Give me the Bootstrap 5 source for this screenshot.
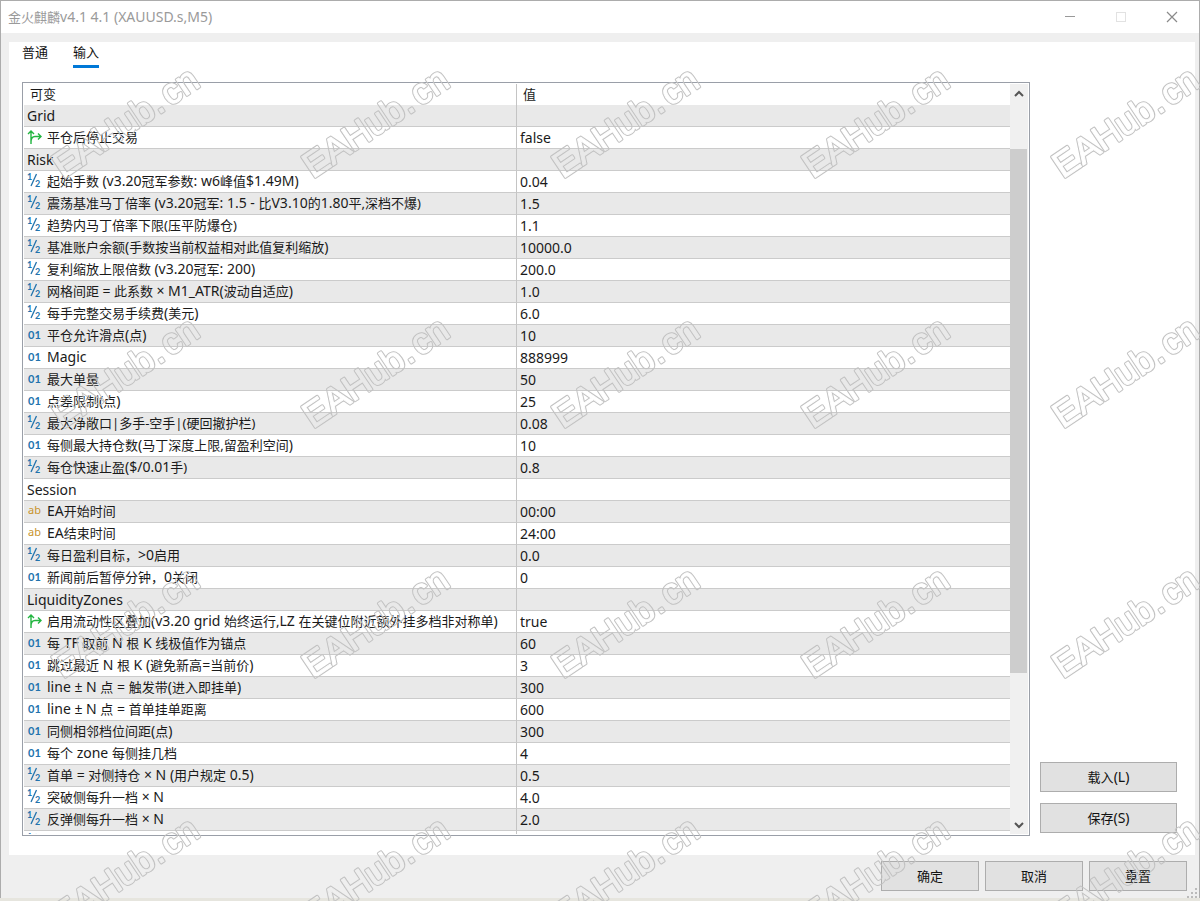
<!DOCTYPE html>
<html lang="zh-CN">
<head>
<meta charset="utf-8">
<meta name="viewport" content="width=device-width, initial-scale=1">
<title>金火麒麟v4.1 4.1 (XAUUSD.s,M5)</title>
<link href="https://cdn.jsdelivr.net/npm/bootstrap@5.3.0/dist/css/bootstrap.min.css" rel="stylesheet">
<style>
body{font-family:"Noto Sans","Noto Sans CJK SC",sans-serif;font-size:13px;line-height:21px;color:#1a1a1a;background:#e6e5de}
.stage{height:100vh;padding-bottom:3px;overflow:hidden}
.win{background:#efefef;border:1px solid #acacac;border-bottom:0;min-height:0}
.titlebar{height:32px;background:#fff;color:#9a9a9a;padding:0 2px 0 7px}
.en{font-size:14px;line-height:1}
.cap{width:51px;height:32px;border:0;background:none;padding:0;line-height:0}
.panel{background:#fff;margin:9px 4px 0 8px;padding:0 18px 19px 13px;min-height:0}
.tabs{height:39px;gap:25px;flex:none;margin-bottom:1px}
.tabs .nav-link{padding:0;height:26px;color:#111;border-bottom:3px solid transparent;border-radius:0}
.tabs .nav-link.active{border-color:#0078d7}
.body-row{min-height:0}
.frame{border:1px solid #9a9fa8;padding:1px;min-height:0}
.params{table-layout:fixed;width:100%;border-collapse:separate;border-spacing:0;color:#1a1a1a}
.params th,.params td{height:22px;padding:0 0 0 3px;line-height:21px;border-bottom:1px solid #cbcbcb;white-space:nowrap;font-weight:400;overflow:hidden}
.params thead th{height:21px;border-bottom:0;padding-left:6px;line-height:21px}
.params th:first-child,.params td:first-child{width:50%;border-right:1px solid #c4c4c4}
.params td:last-child{font-size:14px}
.params tbody tr:nth-child(odd){background:#e9e9e9}
.params .grp td{font-size:14px}
.ic{display:inline-block;width:20px;height:20px;line-height:20px;vertical-align:top;color:#2273ad}
.ic-int::before{content:"01";display:block;padding-left:1px;font:700 11px/19px Lato,sans-serif}
.ic-str{color:#c8942b}
.ic-str::before{content:"ab";display:block;padding-left:1px;font:11px/18px "Noto Sans",sans-serif}
.ic svg{display:block;margin-top:2px}
.sbar{width:18px;background:#f0f0f0;flex:none}
.sbar button{height:19px;border:0;background:none;padding:0;line-height:0}
.thumb{background:#cdcdcd;margin-right:1px}
.side{width:137px;gap:11px;padding-bottom:3px;margin-left:10px;flex:none}
.wbtn{height:30px;border:1px solid #adadad;border-radius:0;background:#e1e1e1;padding:0;font-size:13px;line-height:20px;color:#111}
.wbtn:hover{background:#e5f1fb;border-color:#0078d7}
.foot{padding:6px 12px 7px;gap:6px}
.foot .wbtn{width:98px}
.grip{right:1px;bottom:0;line-height:0}
.wm{inset:0;pointer-events:none}
</style>
</head>
<body>
<div class="stage d-flex flex-column position-relative">
<div class="win d-flex flex-column flex-grow-1 position-relative">
  <header class="titlebar d-flex align-items-center">
    <div class="flex-grow-1">金火麒麟<span class="en">v4.1 4.1 (XAUUSD.s,M5)</span></div>
    <button class="cap" aria-label="最小化"><svg width="12" height="12"><path d="M1 5.500H11" stroke="#999"/></svg></button>
    <button class="cap" aria-label="最大化" disabled><svg width="12" height="12"><rect x="1.500" y="1.500" width="9" height="9" fill="none" stroke="#e2e2e2"/></svg></button>
    <button class="cap" aria-label="关闭"><svg width="12" height="12"><path d="M1 1L11 11M11 1L1 11" stroke="#8a8a8a" stroke-width="1.200"/></svg></button>
  </header>
  <main class="panel d-flex flex-column flex-grow-1">
    <nav class="tabs nav">
      <a class="nav-link" href="#common">普通</a>
      <a class="nav-link active" href="#inputs">输入</a>
    </nav>
    <div class="body-row d-flex flex-grow-1">
      <div class="frame d-flex flex-grow-1">
        <div class="flex-grow-1 overflow-hidden">
        <table class="params">
          <thead><tr><th scope="col">可变</th><th scope="col">值</th></tr></thead>
          <tbody>
          <tr class="grp"><td>Grid</td><td></td></tr>
          <tr><td><span class="ic"><svg width="15" height="16"><use href="#flow"/></svg></span>平仓后停止交易</td><td>false</td></tr>
          <tr class="grp"><td>Risk</td><td></td></tr>
          <tr><td><span class="ic"><svg width="15" height="16"><use href="#half"/></svg></span>起始手数 <span class="en">(v3.20</span>冠军参数<span class="en">: w6</span>峰值<span class="en">$1.49M)</span></td><td>0.04</td></tr>
          <tr><td><span class="ic"><svg width="15" height="16"><use href="#half"/></svg></span>震荡基准马丁倍率 <span class="en">(v3.20</span>冠军<span class="en">: 1.5 - </span>比<span class="en">V3.10</span>的<span class="en">1.80</span>平,深档不爆)</td><td>1.5</td></tr>
          <tr><td><span class="ic"><svg width="15" height="16"><use href="#half"/></svg></span>趋势内马丁倍率下限(压平防爆仓)</td><td>1.1</td></tr>
          <tr><td><span class="ic"><svg width="15" height="16"><use href="#half"/></svg></span>基准账户余额<span class="en">(</span>手数按当前权益相对此值复利缩放<span class="en">)</span></td><td>10000.0</td></tr>
          <tr><td><span class="ic"><svg width="15" height="16"><use href="#half"/></svg></span>复利缩放上限倍数 <span class="en">(v3.20</span>冠军<span class="en">: 200)</span></td><td>200.0</td></tr>
          <tr><td><span class="ic"><svg width="15" height="16"><use href="#half"/></svg></span>网格间距 <span class="en">= </span>此系数 <span class="en">× M1_ATR(</span>波动自适应<span class="en">)</span></td><td>1.0</td></tr>
          <tr><td><span class="ic"><svg width="15" height="16"><use href="#half"/></svg></span>每手完整交易手续费<span class="en">(</span>美元<span class="en">)</span></td><td>6.0</td></tr>
          <tr><td><span class="ic ic-int"></span>平仓允许滑点<span class="en">(</span>点<span class="en">)</span></td><td>10</td></tr>
          <tr><td><span class="ic ic-int"></span><span class="en">Magic</span></td><td>888999</td></tr>
          <tr><td><span class="ic ic-int"></span>最大单量</td><td>50</td></tr>
          <tr><td><span class="ic ic-int"></span>点差限制<span class="en">(</span>点<span class="en">)</span></td><td>25</td></tr>
          <tr><td><span class="ic"><svg width="15" height="16"><use href="#half"/></svg></span>最大净敞口|多手-空手|(硬回撤护栏)</td><td>0.08</td></tr>
          <tr><td><span class="ic ic-int"></span>每侧最大持仓数<span class="en">(</span>马丁深度上限,留盈利空间<span class="en">)</span></td><td>10</td></tr>
          <tr><td><span class="ic"><svg width="15" height="16"><use href="#half"/></svg></span>每仓快速止盈<span class="en">($/0.01</span>手)</td><td>0.8</td></tr>
          <tr class="grp"><td>Session</td><td></td></tr>
          <tr><td><span class="ic ic-str"></span><span class="en">EA</span>开始时间</td><td>00:00</td></tr>
          <tr><td><span class="ic ic-str"></span><span class="en">EA</span>结束时间</td><td>24:00</td></tr>
          <tr><td><span class="ic"><svg width="15" height="16"><use href="#half"/></svg></span>每日盈利目标，<span class="en">&gt;0</span>启用</td><td>0.0</td></tr>
          <tr><td><span class="ic ic-int"></span>新闻前后暂停分钟，<span class="en">0</span>关闭</td><td>0</td></tr>
          <tr class="grp"><td>LiquidityZones</td><td></td></tr>
          <tr><td><span class="ic"><svg width="15" height="16"><use href="#flow"/></svg></span>启用流动性区叠加<span class="en">(v3.20 grid </span>始终运行,<span class="en">LZ </span>在关键位附近额外挂多档非对称单<span class="en">)</span></td><td>true</td></tr>
          <tr><td><span class="ic ic-int"></span>每<span class="en"> TF </span>取前<span class="en"> N </span>根<span class="en"> K </span>线极值作为锚点</td><td>60</td></tr>
          <tr><td><span class="ic ic-int"></span>跳过最近<span class="en"> N </span>根<span class="en"> K (</span>避免新高<span class="en">=</span>当前价<span class="en">)</span></td><td>3</td></tr>
          <tr><td><span class="ic ic-int"></span><span class="en">line ± N </span>点<span class="en"> = </span>触发带<span class="en">(</span>进入即挂单<span class="en">)</span></td><td>300</td></tr>
          <tr><td><span class="ic ic-int"></span><span class="en">line ± N </span>点<span class="en"> = </span>首单挂单距离</td><td>600</td></tr>
          <tr><td><span class="ic ic-int"></span>同侧相邻档位间距<span class="en">(</span>点<span class="en">)</span></td><td>300</td></tr>
          <tr><td><span class="ic ic-int"></span>每个<span class="en"> zone </span>每侧挂几档</td><td>4</td></tr>
          <tr><td><span class="ic"><svg width="15" height="16"><use href="#half"/></svg></span>首单<span class="en"> = </span>对侧持仓<span class="en"> × N (</span>用户规定<span class="en"> 0.5)</span></td><td>0.5</td></tr>
          <tr><td><span class="ic"><svg width="15" height="16"><use href="#half"/></svg></span>突破侧每升一档<span class="en"> × N</span></td><td>4.0</td></tr>
          <tr><td><span class="ic"><svg width="15" height="16"><use href="#half"/></svg></span>反弹侧每升一档<span class="en"> × N</span></td><td>2.0</td></tr>
          <tr><td><span class="ic"><svg width="15" height="16"><use href="#half"/></svg></span></td><td></td></tr>
          </tbody>
        </table>
        </div>
        <div class="sbar d-flex flex-column">
          <button aria-label="向上滚动"><svg width="10" height="8"><path d="M1 6L5 2L9 6" fill="none" stroke="#555" stroke-width="2"/></svg></button>
          <div class="flex-grow-1">
            <div style="height:6.500%"></div>
            <div class="thumb" style="height:73.500%"></div>
          </div>
          <button aria-label="向下滚动"><svg width="10" height="8"><path d="M1 2L5 6L9 2" fill="none" stroke="#555" stroke-width="2"/></svg></button>
        </div>
      </div>
      <div class="side d-flex flex-column justify-content-end">
        <button class="btn wbtn">载入<span class="en">(L)</span></button>
        <button class="btn wbtn">保存<span class="en">(S)</span></button>
      </div>
    </div>
  </main>
  <footer class="foot d-flex justify-content-end">
    <button class="btn wbtn">确定</button>
    <button class="btn wbtn">取消</button>
    <button class="btn wbtn">重置</button>
  </footer>
  <div class="grip position-absolute"><svg width="11" height="10" fill="#bbb"><path d="M8 0h2v2h-2zM8 4h2v2h-2zM8 8h2v2h-2zM4 4h2v2h-2zM4 8h2v2h-2zM0 8h2v2h-2z"/></svg></div>
</div>
<svg class="wm position-absolute w-100 h-100" aria-hidden="true">
  <defs>
    <symbol id="flow" viewBox="0 0 15 16"><path d="M4 15V2M1 5L4 2L7 5M4 13C4 9 6 7.500 8 7.500H14M11 4.500L14 7.500L11 10.500" fill="none" stroke="#22b540" stroke-width="1.400"/></symbol>
    <symbol id="half" viewBox="0 0 15 16">
      <g fill="#2273ad" font-family="Lato,sans-serif" font-weight="700" font-size="9"><text x="0" y="7">1</text><text x="8" y="14">2</text></g>
      <path d="M9.500 1L4 13" stroke="#2273ad" stroke-width="1.300"/>
    </symbol>
    <mask id="rim" maskUnits="userSpaceOnUse" x="0" y="0" width="250" height="250">
      <g font-family="Liberation Sans,sans-serif" font-size="36" stroke-linejoin="round" transform="translate(63 179) rotate(-34)">
        <text fill="#fff" stroke="#fff" stroke-width="3">EAHub<tspan dx="1">.</tspan><tspan dx="4">cn</tspan></text>
        <text fill="#000" stroke="#000" stroke-width="1">EAHub<tspan dx="1">.</tspan><tspan dx="4">cn</tspan></text>
      </g>
    </mask>
    <pattern id="tile" width="250" height="250" patternUnits="userSpaceOnUse"><rect width="250" height="250" fill="#c2c2c2" mask="url(#rim)"/></pattern>
  </defs>
  <rect width="100%" height="100%" fill="url(#tile)"/>
</svg>
</div>
<script src="https://cdn.jsdelivr.net/npm/bootstrap@5.3.0/dist/js/bootstrap.bundle.min.js"></script>
</body>
</html>
